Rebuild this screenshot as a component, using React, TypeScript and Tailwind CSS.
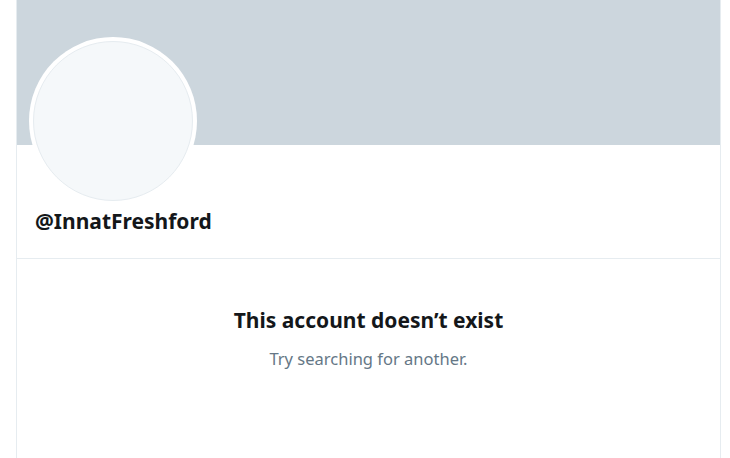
export default function App() {
  return (
    <div className="w-[730px] h-[458px] bg-white overflow-hidden" style={{ fontFamily: '"Noto Sans", "Open Sans", sans-serif' }}>
      <div className="ml-[16px] w-[705px] h-[458px] border-x border-[#e6ecf0] flex flex-col">
        <div className="h-[145px] bg-[#ccd6dd] shrink-0" />
        <div className="px-[12px] border-b border-[#e6ecf0] h-[114px] shrink-0">
          <div className="-mt-[108px] w-[168px] h-[168px] rounded-full bg-white p-[4px]">
            <div className="w-full h-full rounded-full bg-[#f5f8fa] border border-[#e6ecf0]" />
          </div>
          <div className="mt-[4px] ml-[6px] text-[21px] leading-[24px] font-bold text-[#14171a]">@InnatFreshford</div>
        </div>
        <div className="flex flex-col items-center pt-[47px]">
          <div className="text-[21px] leading-[28px] font-bold text-[#14171a]">This account doesn’t exist</div>
          <div className="mt-[14px] text-[16.5px] leading-[22px] text-[#657786]">Try searching for another.</div>
        </div>
      </div>
    </div>
  );
}
